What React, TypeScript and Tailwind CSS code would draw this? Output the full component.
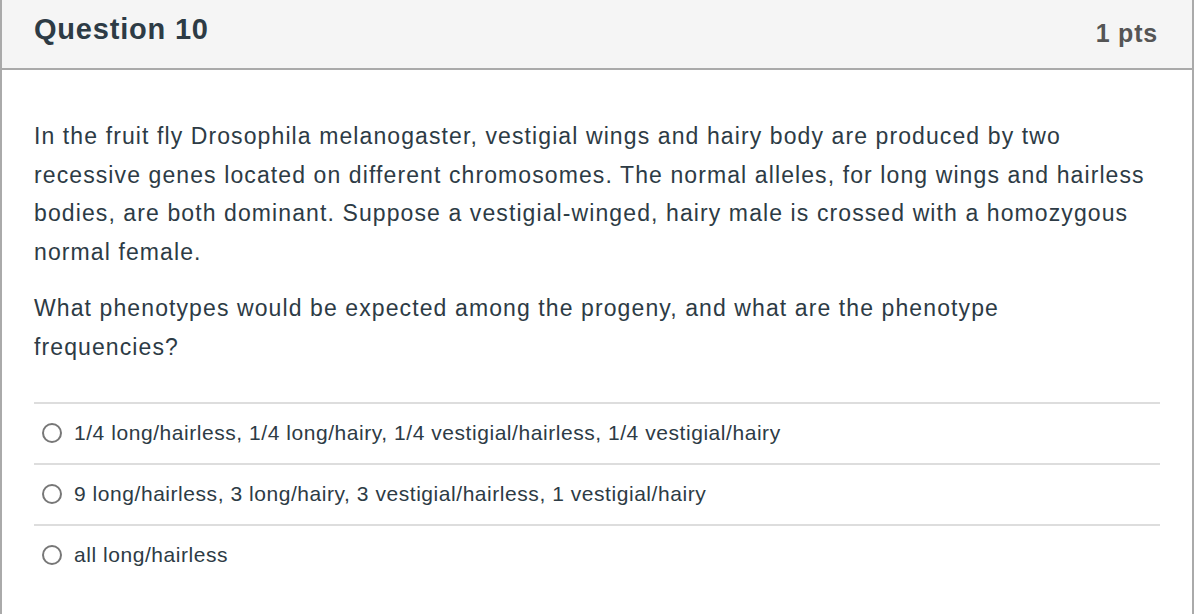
const answers = [
  "1/4 long/hairless, 1/4 long/hairy, 1/4 vestigial/hairless, 1/4 vestigial/hairy",
  "9 long/hairless, 3 long/hairy, 3 vestigial/hairless, 1 vestigial/hairy",
  "all long/hairless",
];

export default function App() {
  return (
    <div className="min-h-[614px] bg-white font-['Liberation_Sans',Arial,sans-serif] text-[#2d3b45]">
      <div className="h-[614px] border-x-2 border-[#aaaaaa]">
        <header className="flex h-[70px] items-start justify-between border-b-2 border-[#aaaaaa] bg-[#f5f5f5] pl-[32px] pr-[34px]">
          <h2 className="pt-[12px] text-[29px] font-bold leading-[34px] tracking-[0.8px]">Question 10</h2>
          <div className="pt-[18px] text-[25px] font-bold leading-[30px] tracking-[0.8px] text-[#555555]">1 pts</div>
        </header>
        <div className="px-[32px] pt-[47px]">
          <div className="text-[23px] leading-[38.5px] tracking-[1.1px]">
            <p>
              In the fruit fly Drosophila melanogaster, vestigial wings and hairy body are produced by two
              recessive genes located on different chromosomes. The normal alleles, for long wings and
              hairless bodies, are both dominant. Suppose a vestigial-winged, hairy male is crossed with a
              homozygous normal female.
            </p>
            <p className="mt-[18px]">
              What phenotypes would be expected among the progeny, and what are the phenotype
              <br />
              frequencies?
            </p>
          </div>
          <ul className="mt-[36px]">
            {answers.map((a) => (
              <li key={a} className="flex h-[61px] items-center gap-[12px] border-t-2 border-[#dddddd] pb-[1px] pl-[8px]">
                <span className="h-[20px] w-[20px] rounded-full border-2 border-[#777777] bg-white" />
                <span className="text-[21px] leading-[28px] tracking-[0.55px]">{a}</span>
              </li>
            ))}
          </ul>
        </div>
      </div>
    </div>
  );
}
